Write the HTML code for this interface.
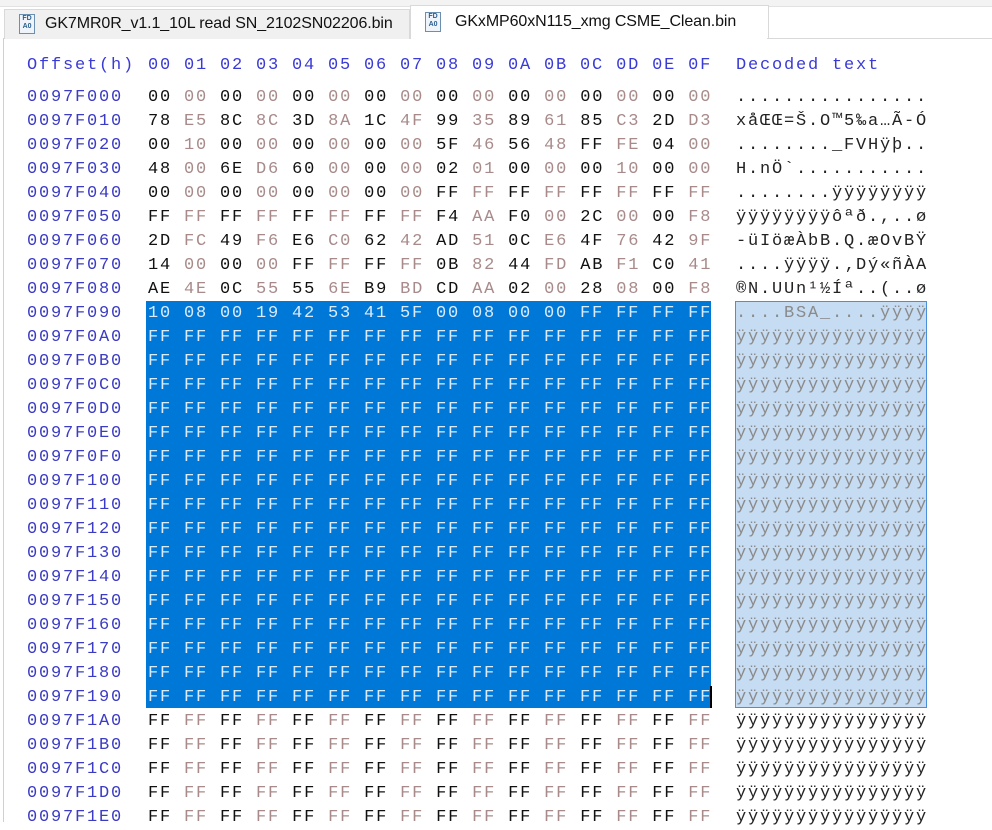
<!DOCTYPE html>
<html><head><meta charset="utf-8"><style>
body{margin:0;width:992px;height:822px;background:#fff;overflow:hidden;position:relative;font-family:"Liberation Mono","DejaVu Sans Mono",monospace;}
.tabbar{position:absolute;left:0;top:0;width:992px;height:39px;background:#fff;}
.topstrip{position:absolute;left:0;top:0;width:992px;height:6px;background:#f3f3f3;border-bottom:1px solid #e2e2e2}
.tab{position:absolute;font-family:"Liberation Sans",sans-serif;font-size:16px;color:#111;line-height:28px;white-space:nowrap;letter-spacing:-0.1px}
.t1{left:4px;top:9px;width:404px;height:29px;background:#f0f0f0;border:1px solid #d9d9d9;border-bottom:none}
.t2{left:410px;top:5px;width:357px;height:33px;background:#fff;border:1px solid #d9d9d9;border-bottom:none;line-height:32px}
.ico{position:absolute;width:14px;height:18px;border:1px solid #6a8fb0;background:#eef4fa;font-size:7px;line-height:8px;color:#2a5e8e;text-align:center;font-weight:bold}
.line{position:absolute;left:767px;top:38px;width:225px;height:1px;background:#d9d9d9}
.lline{position:absolute;left:3px;top:38px;width:1px;height:784px;background:#d0d0d0}
.r{position:absolute;left:0;height:24px;line-height:24px;font-size:17px;letter-spacing:1.8px;white-space:pre}
.r b{position:absolute;left:27px;font-weight:normal;color:#3b3bc4}
.r .h{position:absolute;left:148px;color:#111}
.r .h i{font-style:normal;color:#a88a8a}
.r .d{position:absolute;left:736px;color:#222}
.hd b,.hd .h,.hd .d{color:#3a3ad6}
.s .h,.s .h i{color:#dcebfa}
.s .d{color:#8a8a8a}
.selbg{position:absolute;left:146px;top:301px;width:565px;height:407px;background:#0078d7}
.cur{position:absolute;left:710px;top:686px;width:2px;height:22px;background:#000}
.dbox{position:absolute;left:735px;top:301px;width:190px;height:405px;background:#c6dcf2;border:1px solid #4a90d9}
.rows{position:absolute;left:0;top:2px;width:992px;height:822px}
</style></head><body>
<div class="tabbar"></div>
<div class="topstrip"></div>
<div class="tab t1"><span class="ico" style="left:14px;top:4px">FD<br>A0</span><span style="position:absolute;left:40px;top:0">GK7MR0R_v1.1_10L read SN_2102SN02206.bin</span></div>
<div class="tab t2"><span class="ico" style="left:14px;top:6px">FD<br>A0</span><span style="position:absolute;left:44px;top:0">GKxMP60xN115_xmg CSME_Clean.bin</span></div>
<div class="line"></div>
<div class="lline"></div>
<div class="selbg"></div>
<div class="dbox"></div>
<div class="cur"></div>
<div class="rows">
<div class="r hd" style="top:52px"><b>Offset(h)</b><span class="h">00 01 02 03 04 05 06 07 08 09 0A 0B 0C 0D 0E 0F</span><span class="d">Decoded text</span></div>

<div class="r" style="top:84px"><b>0097F000</b><span class="h">00 <i>00</i> 00 <i>00</i> 00 <i>00</i> 00 <i>00</i> 00 <i>00</i> 00 <i>00</i> 00 <i>00</i> 00 <i>00</i></span><span class="d">................</span></div>
<div class="r" style="top:108px"><b>0097F010</b><span class="h">78 <i>E5</i> 8C <i>8C</i> 3D <i>8A</i> 1C <i>4F</i> 99 <i>35</i> 89 <i>61</i> 85 <i>C3</i> 2D <i>D3</i></span><span class="d">xåŒŒ=Š.O™5‰a…Ã-Ó</span></div>
<div class="r" style="top:132px"><b>0097F020</b><span class="h">00 <i>10</i> 00 <i>00</i> 00 <i>00</i> 00 <i>00</i> 5F <i>46</i> 56 <i>48</i> FF <i>FE</i> 04 <i>00</i></span><span class="d">........_FVHÿþ..</span></div>
<div class="r" style="top:156px"><b>0097F030</b><span class="h">48 <i>00</i> 6E <i>D6</i> 60 <i>00</i> 00 <i>00</i> 02 <i>01</i> 00 <i>00</i> 00 <i>10</i> 00 <i>00</i></span><span class="d">H.nÖ`...........</span></div>
<div class="r" style="top:180px"><b>0097F040</b><span class="h">00 <i>00</i> 00 <i>00</i> 00 <i>00</i> 00 <i>00</i> FF <i>FF</i> FF <i>FF</i> FF <i>FF</i> FF <i>FF</i></span><span class="d">........ÿÿÿÿÿÿÿÿ</span></div>
<div class="r" style="top:204px"><b>0097F050</b><span class="h">FF <i>FF</i> FF <i>FF</i> FF <i>FF</i> FF <i>FF</i> F4 <i>AA</i> F0 <i>00</i> 2C <i>00</i> 00 <i>F8</i></span><span class="d">ÿÿÿÿÿÿÿÿôªð.,..ø</span></div>
<div class="r" style="top:228px"><b>0097F060</b><span class="h">2D <i>FC</i> 49 <i>F6</i> E6 <i>C0</i> 62 <i>42</i> AD <i>51</i> 0C <i>E6</i> 4F <i>76</i> 42 <i>9F</i></span><span class="d">-üIöæÀbB.Q.æOvBŸ</span></div>
<div class="r" style="top:252px"><b>0097F070</b><span class="h">14 <i>00</i> 00 <i>00</i> FF <i>FF</i> FF <i>FF</i> 0B <i>82</i> 44 <i>FD</i> AB <i>F1</i> C0 <i>41</i></span><span class="d">....ÿÿÿÿ.‚Dý«ñÀA</span></div>
<div class="r" style="top:276px"><b>0097F080</b><span class="h">AE <i>4E</i> 0C <i>55</i> 55 <i>6E</i> B9 <i>BD</i> CD <i>AA</i> 02 <i>00</i> 28 <i>08</i> 00 <i>F8</i></span><span class="d">®N.UUn¹½Íª..(..ø</span></div>
<div class="r s" style="top:300px"><b>0097F090</b><span class="h">10 08 00 19 42 53 41 5F 00 08 00 00 FF FF FF FF</span><span class="d">....BSA_....ÿÿÿÿ</span></div>
<div class="r s" style="top:324px"><b>0097F0A0</b><span class="h">FF FF FF FF FF FF FF FF FF FF FF FF FF FF FF FF</span><span class="d">ÿÿÿÿÿÿÿÿÿÿÿÿÿÿÿÿ</span></div>
<div class="r s" style="top:348px"><b>0097F0B0</b><span class="h">FF FF FF FF FF FF FF FF FF FF FF FF FF FF FF FF</span><span class="d">ÿÿÿÿÿÿÿÿÿÿÿÿÿÿÿÿ</span></div>
<div class="r s" style="top:372px"><b>0097F0C0</b><span class="h">FF FF FF FF FF FF FF FF FF FF FF FF FF FF FF FF</span><span class="d">ÿÿÿÿÿÿÿÿÿÿÿÿÿÿÿÿ</span></div>
<div class="r s" style="top:396px"><b>0097F0D0</b><span class="h">FF FF FF FF FF FF FF FF FF FF FF FF FF FF FF FF</span><span class="d">ÿÿÿÿÿÿÿÿÿÿÿÿÿÿÿÿ</span></div>
<div class="r s" style="top:420px"><b>0097F0E0</b><span class="h">FF FF FF FF FF FF FF FF FF FF FF FF FF FF FF FF</span><span class="d">ÿÿÿÿÿÿÿÿÿÿÿÿÿÿÿÿ</span></div>
<div class="r s" style="top:444px"><b>0097F0F0</b><span class="h">FF FF FF FF FF FF FF FF FF FF FF FF FF FF FF FF</span><span class="d">ÿÿÿÿÿÿÿÿÿÿÿÿÿÿÿÿ</span></div>
<div class="r s" style="top:468px"><b>0097F100</b><span class="h">FF FF FF FF FF FF FF FF FF FF FF FF FF FF FF FF</span><span class="d">ÿÿÿÿÿÿÿÿÿÿÿÿÿÿÿÿ</span></div>
<div class="r s" style="top:492px"><b>0097F110</b><span class="h">FF FF FF FF FF FF FF FF FF FF FF FF FF FF FF FF</span><span class="d">ÿÿÿÿÿÿÿÿÿÿÿÿÿÿÿÿ</span></div>
<div class="r s" style="top:516px"><b>0097F120</b><span class="h">FF FF FF FF FF FF FF FF FF FF FF FF FF FF FF FF</span><span class="d">ÿÿÿÿÿÿÿÿÿÿÿÿÿÿÿÿ</span></div>
<div class="r s" style="top:540px"><b>0097F130</b><span class="h">FF FF FF FF FF FF FF FF FF FF FF FF FF FF FF FF</span><span class="d">ÿÿÿÿÿÿÿÿÿÿÿÿÿÿÿÿ</span></div>
<div class="r s" style="top:564px"><b>0097F140</b><span class="h">FF FF FF FF FF FF FF FF FF FF FF FF FF FF FF FF</span><span class="d">ÿÿÿÿÿÿÿÿÿÿÿÿÿÿÿÿ</span></div>
<div class="r s" style="top:588px"><b>0097F150</b><span class="h">FF FF FF FF FF FF FF FF FF FF FF FF FF FF FF FF</span><span class="d">ÿÿÿÿÿÿÿÿÿÿÿÿÿÿÿÿ</span></div>
<div class="r s" style="top:612px"><b>0097F160</b><span class="h">FF FF FF FF FF FF FF FF FF FF FF FF FF FF FF FF</span><span class="d">ÿÿÿÿÿÿÿÿÿÿÿÿÿÿÿÿ</span></div>
<div class="r s" style="top:636px"><b>0097F170</b><span class="h">FF FF FF FF FF FF FF FF FF FF FF FF FF FF FF FF</span><span class="d">ÿÿÿÿÿÿÿÿÿÿÿÿÿÿÿÿ</span></div>
<div class="r s" style="top:660px"><b>0097F180</b><span class="h">FF FF FF FF FF FF FF FF FF FF FF FF FF FF FF FF</span><span class="d">ÿÿÿÿÿÿÿÿÿÿÿÿÿÿÿÿ</span></div>
<div class="r s" style="top:684px"><b>0097F190</b><span class="h">FF FF FF FF FF FF FF FF FF FF FF FF FF FF FF FF</span><span class="d">ÿÿÿÿÿÿÿÿÿÿÿÿÿÿÿÿ</span></div>
<div class="r" style="top:708px"><b>0097F1A0</b><span class="h">FF <i>FF</i> FF <i>FF</i> FF <i>FF</i> FF <i>FF</i> FF <i>FF</i> FF <i>FF</i> FF <i>FF</i> FF <i>FF</i></span><span class="d">ÿÿÿÿÿÿÿÿÿÿÿÿÿÿÿÿ</span></div>
<div class="r" style="top:732px"><b>0097F1B0</b><span class="h">FF <i>FF</i> FF <i>FF</i> FF <i>FF</i> FF <i>FF</i> FF <i>FF</i> FF <i>FF</i> FF <i>FF</i> FF <i>FF</i></span><span class="d">ÿÿÿÿÿÿÿÿÿÿÿÿÿÿÿÿ</span></div>
<div class="r" style="top:756px"><b>0097F1C0</b><span class="h">FF <i>FF</i> FF <i>FF</i> FF <i>FF</i> FF <i>FF</i> FF <i>FF</i> FF <i>FF</i> FF <i>FF</i> FF <i>FF</i></span><span class="d">ÿÿÿÿÿÿÿÿÿÿÿÿÿÿÿÿ</span></div>
<div class="r" style="top:780px"><b>0097F1D0</b><span class="h">FF <i>FF</i> FF <i>FF</i> FF <i>FF</i> FF <i>FF</i> FF <i>FF</i> FF <i>FF</i> FF <i>FF</i> FF <i>FF</i></span><span class="d">ÿÿÿÿÿÿÿÿÿÿÿÿÿÿÿÿ</span></div>
<div class="r" style="top:804px"><b>0097F1E0</b><span class="h">FF <i>FF</i> FF <i>FF</i> FF <i>FF</i> FF <i>FF</i> FF <i>FF</i> FF <i>FF</i> FF <i>FF</i> FF <i>FF</i></span><span class="d">ÿÿÿÿÿÿÿÿÿÿÿÿÿÿÿÿ</span></div>
</div>
</body></html>
